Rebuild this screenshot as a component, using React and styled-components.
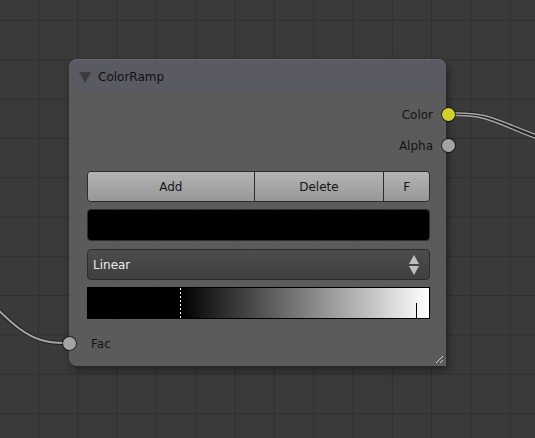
import React from "react";
import styled, { createGlobalStyle } from "styled-components";

const GlobalStyle = createGlobalStyle`
    *, *::before, *::after {
        box-sizing: border-box;
    }
    html, body {
        margin: 0;
        padding: 0;
    }
    body {
        background: #393939;
        font-family: "DejaVu Sans", "Liberation Sans", sans-serif;
    }
`;

const Canvas = styled.div`
    position: relative;
    width: 535px;
    height: 438px;
    overflow: hidden;
    background-color: #3a3a3a;
    background-image:
        linear-gradient(to right, #303030 1px, transparent 1px),
        linear-gradient(to bottom, #303030 1px, transparent 1px);
    background-size: 39.3px 39.3px;
    background-position: 38px 20px;
`;

const Links = styled.svg`
    position: absolute;
    left: 0;
    top: 0;
`;

const Node = styled.div`
    position: absolute;
    left: 69px;
    top: 59px;
    width: 377px;
    height: 307px;
    border-radius: 8px 8px 0 8px;
    background: rgba(97, 97, 97, 0.86);
    box-shadow: 2px 4px 9px rgba(0, 0, 0, 0.45);
    display: flex;
    flex-direction: column;
`;

const Header = styled.div`
    height: 31px;
    border-radius: 8px 8px 0 0;
    background: rgba(90, 90, 100, 0.92);
    box-shadow: inset 0 1px 0 rgba(255, 255, 255, 0.08);
    display: flex;
    align-items: center;
    gap: 7px;
    padding: 5px 0 0 10px;
    font-size: 12px;
    color: #111;
`;

const Collapse = styled.span`
    width: 0;
    height: 0;
    border-left: 6px solid transparent;
    border-right: 6px solid transparent;
    border-top: 11px solid #3c3c3f;
    margin-top: 1px;
`;

const Body = styled.div`
    flex: 1;
    display: flex;
    flex-direction: column;
    padding: 9px 16px 0 18px;
`;

const SocketRow = styled.div`
    position: relative;
    height: 31px;
    flex-shrink: 0;
    display: flex;
    align-items: center;
    justify-content: ${(p) => (p.$output ? "flex-end" : "flex-start")};
    padding-left: ${(p) => (p.$output ? "0" : "4px")};
    margin-right: ${(p) => (p.$output ? "-3px" : "0")};
    font-size: 12px;
    color: #141414;
`;

const Socket = styled.span`
    position: absolute;
    top: 50%;
    ${(p) => (p.$output ? "right: -22px;" : "left: -24px;")}
    width: 13px;
    height: 13px;
    margin-top: -7px;
    border-radius: 50%;
    background: ${(p) => p.$color};
    box-shadow: 0 0 0 1px rgba(0, 0, 0, 0.55);
`;

const ButtonRow = styled.div`
    display: flex;
    flex-shrink: 0;
    height: 31px;
    margin-top: 10px;
    border: 1px solid #2c2c2c;
    border-radius: 4px;
    overflow: hidden;
`;

const Button = styled.div`
    flex: ${(p) => p.$grow} 0 0;
    display: flex;
    align-items: center;
    justify-content: center;
    font-size: 12px;
    color: #151515;
    background: linear-gradient(to bottom, #b4b4b4, #979797);
    border-left: ${(p) => (p.$first ? "none" : "1px solid #2c2c2c")};
`;

const ColorField = styled.div`
    flex-shrink: 0;
    height: 32px;
    margin-top: 7px;
    background: #000;
    border: 1px solid #2e2e2e;
    border-radius: 4px;
`;

const Dropdown = styled.div`
    flex-shrink: 0;
    height: 31px;
    margin-top: 8px;
    display: flex;
    align-items: center;
    justify-content: space-between;
    padding: 0 10px 0 5px;
    font-size: 12px;
    color: #ececec;
    background: linear-gradient(to bottom, #4c4c4c, #3f3f3f);
    border: 1px solid #2c2c2c;
    border-radius: 4px;
`;

const Arrows = styled.span`
    display: flex;
    flex-direction: column;
    gap: 2px;
`;

const Arrow = styled.span`
    width: 0;
    height: 0;
    border-left: 5px solid transparent;
    border-right: 5px solid transparent;
    ${(p) => (p.$up ? "border-bottom: 9px solid #c0c0c0;" : "border-top: 9px solid #c0c0c0;")}
`;

const Ramp = styled.div`
    position: relative;
    flex-shrink: 0;
    height: 32px;
    margin-top: 7px;
    border: 1px solid #000;
    background: linear-gradient(to right, #000 0px, #000 93px, #fff 100%);
`;

const ActiveStop = styled.span`
    position: absolute;
    top: 0;
    bottom: 0;
    left: 92px;
    width: 1px;
    background: repeating-linear-gradient(to bottom, #fff 0 2px, #000 2px 4px);
`;

const Stop = styled.span`
    position: absolute;
    bottom: 0;
    height: 15px;
    left: 328px;
    width: 1px;
    background: #000;
`;

const InputRow = styled(SocketRow)`
    margin-top: 9px;
`;

const Resize = styled.svg`
    position: absolute;
    right: 2px;
    bottom: 2px;
`;

export default function App() {
    return (
        <>
            <GlobalStyle />
            <Canvas>
                <Links width="535" height="438">
                    <path d="M -40 270 C 15 330, 30 343, 64 343" stroke="#222" strokeWidth="4" fill="none" />
                    <path d="M -40 270 C 15 330, 30 343, 64 343" stroke="#a5a5a5" strokeWidth="2" fill="none" />
                    <path d="M 452 114 C 490 113, 495 122, 545 140" stroke="#222" strokeWidth="5.5" fill="none" />
                    <path d="M 452 113 C 490 112, 495 120, 545 138" stroke="#a5a5a5" strokeWidth="1.5" fill="none" />
                    <path d="M 452 115.5 C 490 114.5, 495 124, 545 142" stroke="#a5a5a5" strokeWidth="1.5" fill="none" />
                </Links>
                <Node>
                    <Header>
                        <Collapse />
                        ColorRamp
                    </Header>
                    <Body>
                        <SocketRow $output>
                            Color
                            <Socket $output $color="#cfcf2e" />
                        </SocketRow>
                        <SocketRow $output>
                            Alpha
                            <Socket $output $color="#a4a4a4" />
                        </SocketRow>
                        <ButtonRow>
                            <Button $first $grow={167}>Add</Button>
                            <Button $grow={130}>Delete</Button>
                            <Button $grow={45}>F</Button>
                        </ButtonRow>
                        <ColorField />
                        <Dropdown>
                            Linear
                            <Arrows>
                                <Arrow $up />
                                <Arrow />
                            </Arrows>
                        </Dropdown>
                        <Ramp>
                            <ActiveStop />
                            <Stop />
                        </Ramp>
                        <InputRow>
                            Fac
                            <Socket $color="#a4a4a4" />
                        </InputRow>
                    </Body>
                    <Resize width="9" height="9" viewBox="0 0 9 9">
                        <path d="M 1 8 L 8 1 M 5 8 L 8 5" stroke="#d0d0d0" strokeWidth="1" />
                    </Resize>
                </Node>
            </Canvas>
        </>
    );
}
